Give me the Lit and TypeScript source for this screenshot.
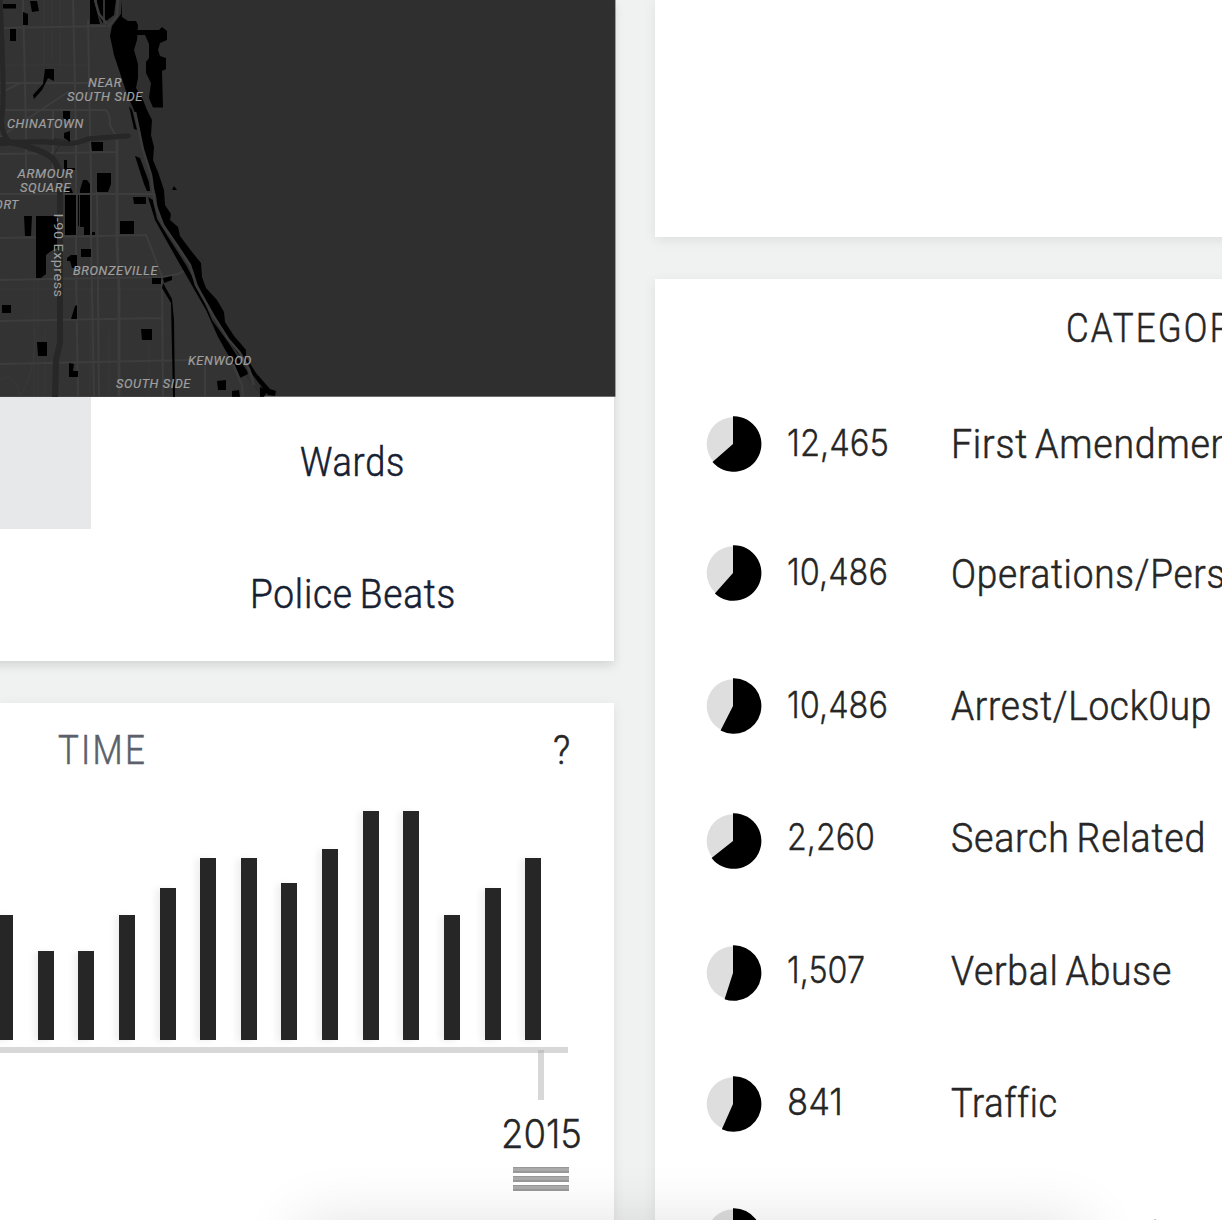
import { LitElement, html, css, svg } from "lit";
import { customElement, property } from "lit/decorators.js";

/** A line of text whose advance width is set exactly, so it condenses like a narrow face. */
@customElement("fit-text")
class FitText extends LitElement {
  @property() text = "";
  @property({ type: Number }) width = 100;
  @property({ type: Number }) size = 40;
  static styles = css`
    :host { display: block; flex: none; }
    svg { display: block; overflow: visible; }
    text { font-family: var(--face, Roboto), "Liberation Sans", sans-serif; font-weight: 300; letter-spacing: var(--tracking, 0.8px); word-spacing: -3px; fill: currentColor; stroke: currentColor; stroke-width: var(--stem, 0.55px); }
  `;
  render() {
    return html`<svg width=${this.width} height=${this.size}>
      <text x="0" y=${this.size * 0.86} font-size=${this.size} textLength=${this.width} lengthAdjust="spacingAndGlyphs">${this.text}</text>
    </svg>`;
  }
}

@customElement("share-pie")
class SharePie extends LitElement {
  @property({ type: Number }) degrees = 180;
  static styles = css`
    :host { display: block; flex: none; width: 56px; height: 56px; }
    svg { display: block; }
  `;
  render() {
    const a = (this.degrees * Math.PI) / 180;
    const x = 27.6 + 27.8 * Math.sin(a);
    const y = 28 - 27.8 * Math.cos(a);
    return html`<svg width="56" height="56" viewBox="0 0 56 56">
      <circle cx="27.5" cy="28" r="26.8" fill="#dedede" />
      <path d="M27 28V.2H28A27.8 27.8 0 1 1 ${x} ${y}Z" fill="#000" />
    </svg>`;
  }
}

@customElement("city-map")
class CityMap extends LitElement {
  static styles = css`
    :host { display: block; flex: none; height: 397px; }
    svg { display: block; overflow: hidden; }
    .label { font: italic 400 12.6px Roboto, sans-serif; letter-spacing: 0.6px; fill: #a0a0a0; stroke: #a0a0a0; stroke-width: 0.2px; }
    .road { fill: none; stroke: #3d3d3d; stroke-width: 2; }
    .wide { stroke-width: 3; }
    .faint { fill: none; stroke: #393939; stroke-width: 1; }
    .highway { fill: none; stroke: #272727; stroke-linecap: round; }
  `;
  render() {
    const labels: [string, number, number, number][] = [
      ["NEAR", 88, 87, 34], ["SOUTH SIDE", 67, 100.5, 76], ["CHINATOWN", 7, 127.8, 77],
      ["ARMOUR", 17.5, 178.3, 56], ["SQUARE", 20, 192, 51], ["PORT", -14, 209, 33],
      ["BRONZEVILLE", 73, 275, 85], ["KENWOOD", 188, 365, 64], ["SOUTH SIDE", 116, 388, 75],
    ];
    return html`<svg width="616" height="397" viewBox="0 0 616 397">
      <rect width="615.4" height="396.7" fill="#2f2f2f" />
      <path fill="#333" d="M0 0H120L112 25L124 85L140 140L153 190L170 240L192 280L215 325L240 370L262 396.7H0Z" />
      <path class="faint" d="M44 0V65M52 0V60M60 0V70M34 280V396M38 280V396M45 330V396M90 290V396M109 330V396M149 330V396M0 289H160M0 65H90M20 396Q35 375 35 330M0 380Q15 370 20 396" />
      <path class="road" d="M0 28L106 26M0 83H95M0 110H105Q110 112 110 125L117 138M0 154L116 152M0 194H155M0 238L146 235L162 276M0 280L162 277L178 274L187 269M0 321L162 318M0 364L190 360M23 0L26 130V170M73 0L76 130V270L78 396M88 20L91 180V240L94 396M97 190L99 396M162 280L163 396M0 93L20 83M0 137L68 92M53 110V170M205 366V396" />
      <path class="road wide" d="M117 140V240L119 290V396" />
      <path class="highway" stroke-width="5" d="M0 0Q5 100 2 115Q0 130 8 141" />
      <path class="highway" stroke-width="5" d="M-2 144Q25 140 60 143Q75 145 88 139Q110 137 128 136" />
      <path class="highway" stroke-width="1" d="M32 142Q42 137 50 141Q58 137 66 141M52 158L60 144L55 138" />
      <path class="highway" stroke-width="6" d="M0 140Q40 148 52 158Q61 167 60 190V343L56 360L55 397" />
      <g fill="#000">
        <path d="M90 0H94L100 24H90ZM97 0H103V24L97 12ZM105 0H116L114 15L105 22Z" />
        <path d="M122 0V17L128 21H136L138 25L137 40L134 50L138 64V78L136 88L143 100L147 110L152 120L151 135L154 147L153 160L158 172L164 190L165 205L171 214L170 220L178 227L180 236L192 252L201 263L202 277L206 288L217 300L224 312L225 322L234 336L241 344L246 350V357L256 373L270 389L276 391L275 396L268 395L252 374L240 356L226 338L215 321L206 303L198 286L193 270L185 258L172 240L162 225L158 211L156 195L151 180L147 163L142 145L140 130L134 110L127 94L121 76L114 55L110 36L112 26L121 14Z" />
        <path d="M137 30H159L162 27L167 31V40L160 43L158 50L160 56L166 58V69L162 71L163 107.5H153L149 98L151 83L146 73V62L149 58V44L145 35L137 35Z" />
        <path d="M129 106L132 110L137 130L134 129ZM135 156L140 158L149 182L150 191H147L144 184ZM148 197L153 200L157 219L170 240L186 265L200 291L212 320L228 342L247 371L248 374L240 378L231 360L218 337L206 310L190 282L178 261L165 238L155 220Z" />
        <path d="M163 283L172 299L174 320L175 397H173L171 303L162 288ZM163 278L172 276V280L164 283ZM172 190L174 186L177 190Z" />
        <path d="M3 4H16V8.5H3ZM30 1H37L39 11L32 12ZM23 12L28 14V25H23ZM10 29H16V41H10ZM45 69H54V81L48 78L42 90L34 99L33 95L43 84ZM63 111H70V122L63 118ZM64 133L70 131V142L64 138ZM91 142H103V151H92ZM64 160H67V168H75V170H64ZM97 173H111V184L108 192H97ZM65 190L71 188L73 193H65ZM80 190L83 180H87L90 184V193H80Z" />
        <path d="M65 195H76V235H65ZM78 195H79V226H78ZM80 195H90V235H84V227H80ZM92 232H95V235H92ZM24 216H32L31 236H25ZM36 216H57V248L51 251L46 255V274L41 278H36ZM81 249H91V257H81ZM67 258L71 255H77V268H72L70 261H67ZM120 221H134V234H120ZM133 197H146V204H134ZM152 278H161V284H152ZM141 329H152V340H142ZM2 305H11V313H2ZM37 342H47V356H38ZM75 306L77 305V319H71ZM69 363L74 364L73 371H78V377H69ZM217 381L226 380V390H218ZM232 391L239 390L240 396.7H232ZM260 387L268 391L264 396.7H260Z" />
      </g>
      <path d="M95 0L99 14L107 24M118 0L117 16L108 27M135 112L143 150L151 175L155 204L163 225L178 247L190 265L196 285L214 317L228 339L240 353L249 369L254 385M233 364L242 385L243 396" fill="none" stroke="#3b3b3b" stroke-width="2.6" />
      ${labels.map(([t, x, y, w]) => svg`<text class="label" x=${x} y=${y} textLength=${w} lengthAdjust="spacingAndGlyphs">${t}</text>`)}
      <text transform="translate(54 213.5) rotate(90)" textLength="84" lengthAdjust="spacingAndGlyphs" font-family="Roboto, sans-serif" font-size="13.5" letter-spacing="0.4" fill="#a0a0a0">I-90 Express</text>
    </svg>`;
  }
}

interface Category { count: string; countWidth: number; label: string; labelWidth: number; degrees: number; height: number; pieShift: number; }

const categories: Category[] = [
  { count: "12,465", countWidth: 102, label: "First Amendmen", labelWidth: 281, degrees: 229.4, height: 129.5, pieShift: 0 },
  { count: "10,486", countWidth: 101, label: "Operations/Pers", labelWidth: 275, degrees: 222.4, height: 132.5, pieShift: -0.5 },
  { count: "10,486", countWidth: 101, label: "Arrest/Lock0up", labelWidth: 261, degrees: 208, height: 132, pieShift: -0.2 },
  { count: "2,260", countWidth: 88, label: "Search Related", labelWidth: 255, degrees: 232.5, height: 133, pieShift: 2.8 },
  { count: "1,507", countWidth: 78, label: "Verbal Abuse", labelWidth: 221, degrees: 199, height: 132, pieShift: 1.8 },
  { count: "841", countWidth: 56, label: "Traffic", labelWidth: 107, degrees: 205, height: 134, pieShift: 1.3 },
  { count: "476", countWidth: 60, label: "Special Record", labelWidth: 208, degrees: 205, height: 132, pieShift: -0.8 },
];

const bars = [125, 89, 89, 125, 152.5, 182, 182, 157, 191.5, 229, 229, 125, 152.5, 182];

@customElement("app-root")
class AppRoot extends LitElement {
  static styles = css`
    :host { display: block; }
    .page { position: relative; display: flex; gap: 41px; width: 1222px; height: 1220px; overflow: hidden; background: #f0f2f1; color: #262626; }
    .left { width: 614px; flex: none; display: flex; flex-direction: column; gap: 42px; }
    .right { flex: 1; display: flex; flex-direction: column; gap: 42px; }
    .card { background: #fff; box-shadow: 0 3px 12px rgba(0, 0, 0, 0.08); }
    .areas { height: 661px; margin-left: -20px; padding-left: 20px; box-shadow: 0 4px 10px rgba(0, 0, 0, 0.13); }
    .grid { display: grid; grid-template: 132px 132px / 91px 523px; color: #162033; }
    .cell { display: flex; align-items: center; justify-content: center; padding-bottom: 2px; box-sizing: border-box; }
    .selected { background: #e6e8ea; }
    .time { flex: none; height: 560px; }
    .head { display: flex; justify-content: space-between; padding: 27px 43px 0 58px; height: 78px; box-sizing: border-box; }
    .title { color: #5b616c; }
    .title, .heading { --tracking: 2.6px; }
    .count, .year { --face: Inter; --tracking: 0px; --stem: 0.3px; }
    .bars { display: flex; align-items: flex-end; gap: 24.64px; height: 259px; margin-left: -3px; }
    .bar { width: 16px; flex: none; background: #262626; box-shadow: -4px 1px 7px rgba(0, 0, 0, 0.07); }
    .axis { height: 6px; width: 568px; margin-top: 7.2px; background: #d8d8d8; }
    .marker { display: flex; flex-direction: column; align-items: center; width: 82px; margin: -3px 0 0 500.4px; }
    .tick { width: 6px; height: 50px; background: rgba(170, 170, 170, 0.46); }
    .year { margin-top: 13.5px; }
    .grip { display: flex; flex-direction: column; gap: 3px; margin-top: 14.5px; }
    .line { width: 56px; height: 6px; box-sizing: border-box; background: #ababab; border: solid #999; border-width: 1px 0 2px; }
    .blank { flex: none; height: 237px; }
    .categories { flex: none; height: 1000px; padding: 28px 0 0 51.4px; box-sizing: border-box; }
    .heading { margin-left: 359.6px; height: 101px; }
    .row { display: flex; align-items: flex-start; }
    .pie { flex: none; width: 56px; padding-top: 8px; }
    .count { flex: none; width: 162px; padding: 15.6px 0 0 24.2px; box-sizing: border-box; }
    .name { padding: 16px 0 0 26.4px; }
    .tray { position: absolute; left: 300px; top: 1222px; width: 785px; height: 120px; border-radius: 10px; box-shadow: 0 0 62px rgba(0, 0, 0, 0.12); pointer-events: none; }
  `;
  render() {
    return html`<div class="page">
      <div class="left">
        <section class="card areas">
          <city-map></city-map>
          <div class="grid">
            <div class="cell selected"></div>
            <div class="cell"><fit-text text="Wards" width="105" size="40"></fit-text></div>
            <div class="cell"></div>
            <div class="cell"><fit-text text="Police Beats" width="206" size="40"></fit-text></div>
          </div>
        </section>
        <section class="card time">
          <div class="head">
            <fit-text class="title" text="TIME" width="89" size="40"></fit-text>
            <fit-text text="?" width="18" size="40"></fit-text>
          </div>
          <div class="bars">${bars.map((h) => html`<div class="bar" style="height:${h}px"></div>`)}</div>
          <div class="axis"></div>
          <div class="marker">
            <div class="tick"></div>
            <fit-text class="year" text="2015" width="81" size="39"></fit-text>
            <div class="grip"><div class="line"></div><div class="line"></div><div class="line"></div></div>
          </div>
        </section>
      </div>
      <div class="right">
        <section class="card blank"></section>
        <section class="card categories">
          <fit-text class="heading" text="CATEGOR" width="168" size="41"></fit-text>
          ${categories.map((c) => html`<div class="row" style="height:${c.height}px">
            <div class="pie"><share-pie .degrees=${c.degrees} style="margin-top:${c.pieShift}px"></share-pie></div>
            <div class="count"><fit-text text=${c.count} .width=${c.countWidth} size="37"></fit-text></div>
            <div class="name"><fit-text text=${c.label} .width=${c.labelWidth} size="40"></fit-text></div>
          </div>`)}
        </section>
      </div>
      <div class="tray"></div>
    </div>`;
  }
}
